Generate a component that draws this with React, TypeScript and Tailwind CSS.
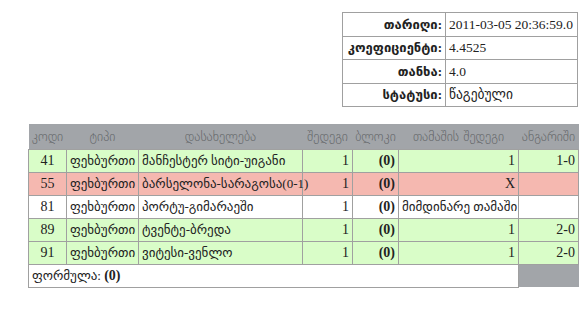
const rows = [
  { code: "41", type: "ფეხბურთი", name: "მანჩესტერ სიტი-უიგანი", res: "1", block: "(0)", game: "1", score: "1-0", bg: "bg-[#d9fdc8]" },
  { code: "55", type: "ფეხბურთი", name: "ბარსელონა-სარაგოსა(0-1)", res: "1", block: "(0)", game: "X", score: "", bg: "bg-[#f5b8b0]" },
  { code: "81", type: "ფეხბურთი", name: "პორტუ-გიმარაეში", res: "1", block: "(0)", game: "მიმდინარე თამაში", score: "", bg: "bg-white" },
  { code: "89", type: "ფეხბურთი", name: "ტვენტე-ბრედა", res: "1", block: "(0)", game: "1", score: "2-0", bg: "bg-[#d9fdc8]" },
  { code: "91", type: "ფეხბურთი", name: "ვიტესი-ვენლო", res: "1", block: "(0)", game: "1", score: "2-0", bg: "bg-[#d9fdc8]" },
];

const info = [
  ["თარიღი:", "2011-03-05 20:36:59.0"],
  ["კოეფიციენტი:", "4.4525"],
  ["თანხა:", "4.0"],
  ["სტატუსი:", "წაგებული"],
];

const cell = "border border-[#a0a0a0] px-[3px] h-[23px] leading-none";

export default function App() {
  return (
    <div className="w-[585px] h-[310px] bg-white text-[13px] text-[#222] font-['Liberation_Serif','DejaVu_Sans',serif]">
      <div className="flex justify-end pt-[12px] pr-[7px]">
        <table className="border-collapse table-fixed w-[236px]">
          <colgroup>
            <col className="w-[103px]" />
            <col />
          </colgroup>
          <tbody>
            {info.map(([k, v]) => (
              <tr key={k}>
                <td className={`${cell} text-right font-bold whitespace-nowrap !h-[23.5px]`}>{k}</td>
                <td className={`${cell} text-left whitespace-nowrap text-[13.5px] !h-[23.5px]`}>{v}</td>
              </tr>
            ))}
          </tbody>
        </table>
      </div>
      <div className="pl-[28px] pt-[17px]">
        <table className="border-collapse table-fixed w-[550px]">
          <colgroup>
            <col className="w-[38px]" />
            <col className="w-[72px]" />
            <col className="w-[164px]" />
            <col className="w-[50px]" />
            <col className="w-[46px]" />
            <col className="w-[120px]" />
            <col className="w-[60px]" />
          </colgroup>
          <thead>
            <tr className="bg-[#a2a5a9] text-[#606265] font-['DejaVu_Sans',sans-serif] text-[13px]">
              <th className="font-extralight h-[25px] text-center whitespace-nowrap">კოდი</th>
              <th className="font-extralight text-center">ტიპი</th>
              <th className="font-extralight text-center">დასახელება</th>
              <th className="font-extralight text-center">შედეგი</th>
              <th className="font-extralight text-center">ბლოკი</th>
              <th className="font-extralight text-center whitespace-nowrap">თამაშის შედეგი</th>
              <th className="font-extralight text-center">ანგარიში</th>
            </tr>
          </thead>
          <tbody>
            {rows.map((r) => (
              <tr key={r.code} className={r.bg}>
                <td className={`${cell} text-center text-[14px]`}>{r.code}</td>
                <td className={`${cell} whitespace-nowrap`}>{r.type}</td>
                <td className={`${cell} whitespace-nowrap`}>{r.name}</td>
                <td className={`${cell} text-right text-[14px]`}>{r.res}</td>
                <td className={`${cell} text-right font-bold text-[14px]`}>{r.block}</td>
                <td className={`${cell} text-right whitespace-nowrap ${r.game.length < 3 ? "text-[14px]" : ""}`}>{r.game}</td>
                <td className={`${cell} text-right text-[14px]`}>{r.score}</td>
              </tr>
            ))}
            <tr>
              <td colSpan={6} className={`${cell} text-left`}>
                ფორმულა: <span className="font-bold text-[14px]">(0)</span>
              </td>
              <td className="bg-[#a2a5a9] h-[23px]"></td>
            </tr>
          </tbody>
        </table>
      </div>
    </div>
  );
}
